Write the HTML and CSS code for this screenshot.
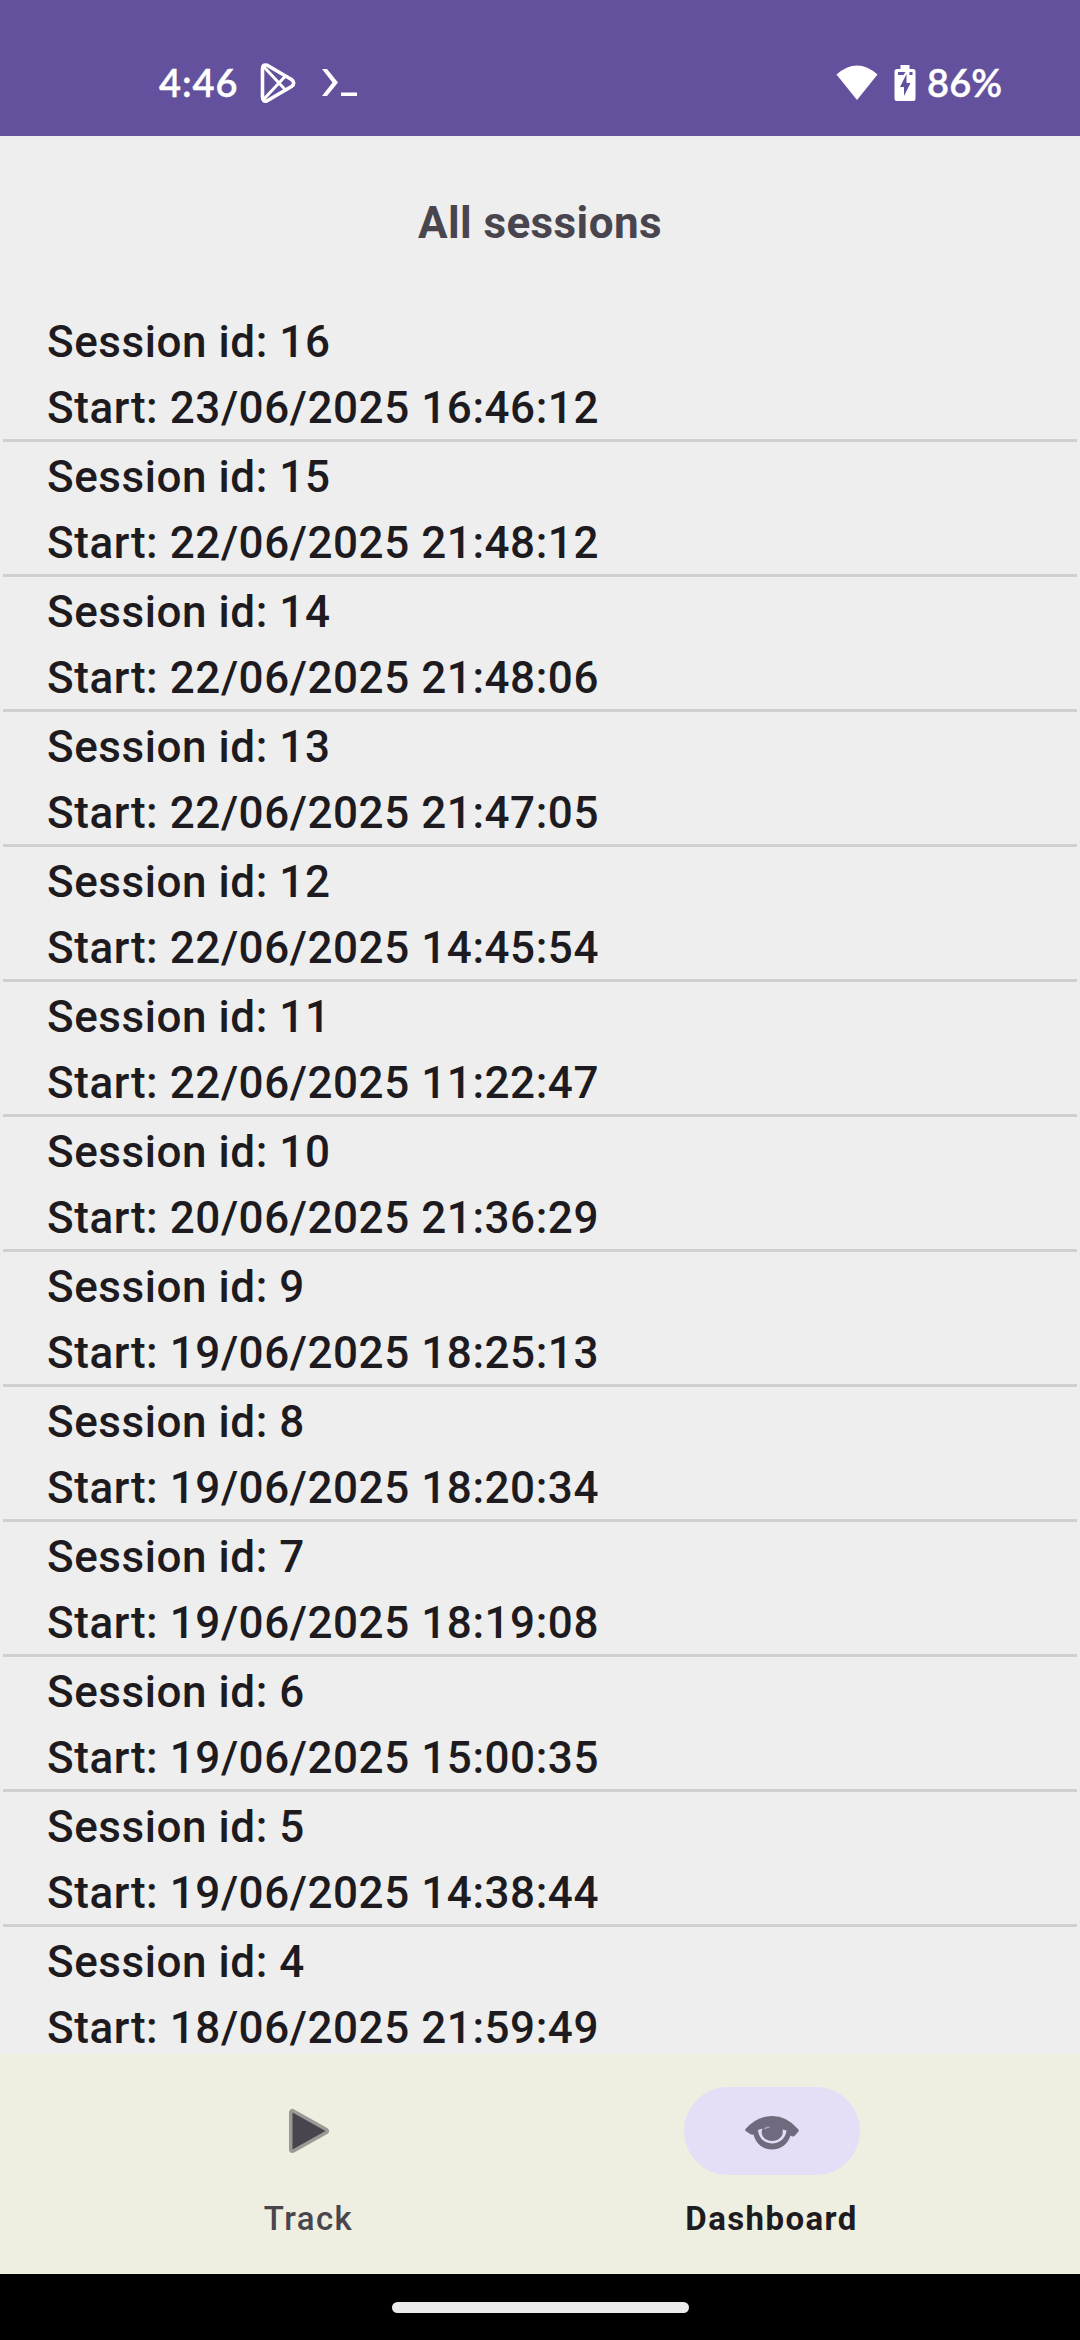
FILE: index.html
```html
<!DOCTYPE html>
<html lang="en">
<head>
<meta charset="utf-8">
<title>All sessions</title>
<link rel="stylesheet" href="styles.css">
</head>
<body>
<div class="screen">
  <header class="status-bar">
    <div class="status-left">
      <span class="clock">4:46</span>
      <svg class="play-store" width="36" height="40" viewBox="0 0 36 40" fill="none" stroke="#fff" stroke-width="3.6" stroke-linejoin="round" stroke-linecap="round"><path d="M2.5 5.5v29q.3 4.8 4.700 3.200L31.500 23.500q4.500-3.500 0-7L7.200 2.300Q2.800.8 2.500 5.500z"/><path d="M4 4l21.500 23M4 36l21.500-23" stroke-width="3"/></svg>
      <svg class="terminal" width="36" height="30" viewBox="0 0 36 30" fill="#fff"><path d="M0 1h5l11 13.500L5 28H0l10.500-13.500zM19 24.500h16v3.500H19z"/></svg>
    </div>
    <div class="status-right">
      <svg class="wifi" width="42" height="36" viewBox="0 0 42 36" fill="#fff"><path d="M0.500 9.500Q21-8.500 41.500 9.500L21 35z"/></svg>
      <svg class="battery" width="22" height="36" viewBox="0 0 22 36"><path fill="#fff" d="M6.500 0h9v4H19q2.500 0 2.500 2.500v27Q21.500 36 19 36H3Q.5 36 .5 33.500v-27Q.5 4 3 4h3.500z"/><path fill="#64519d" d="M4 7h7.500L9.500 10H4zM15.500 7h3v3h-3zM12.500 9v9h4L10 31v-9H6z"/></svg>
      <span class="percent">86%</span>
    </div>
  </header>
  <main class="content">
    <h1 class="title">All sessions</h1>
    <ul class="sessions">
      <li class="session"><p>Session id: 16</p><p>Start: 23/06/2025 16:46:12</p></li>
      <li class="session"><p>Session id: 15</p><p>Start: 22/06/2025 21:48:12</p></li>
      <li class="session"><p>Session id: 14</p><p>Start: 22/06/2025 21:48:06</p></li>
      <li class="session"><p>Session id: 13</p><p>Start: 22/06/2025 21:47:05</p></li>
      <li class="session"><p>Session id: 12</p><p>Start: 22/06/2025 14:45:54</p></li>
      <li class="session"><p>Session id: 11</p><p>Start: 22/06/2025 11:22:47</p></li>
      <li class="session"><p>Session id: 10</p><p>Start: 20/06/2025 21:36:29</p></li>
      <li class="session"><p>Session id: 9</p><p>Start: 19/06/2025 18:25:13</p></li>
      <li class="session"><p>Session id: 8</p><p>Start: 19/06/2025 18:20:34</p></li>
      <li class="session"><p>Session id: 7</p><p>Start: 19/06/2025 18:19:08</p></li>
      <li class="session"><p>Session id: 6</p><p>Start: 19/06/2025 15:00:35</p></li>
      <li class="session"><p>Session id: 5</p><p>Start: 19/06/2025 14:38:44</p></li>
      <li class="session"><p>Session id: 4</p><p>Start: 18/06/2025 21:59:49</p></li>
    </ul>
  </main>
  <nav class="bottom-nav">
    <a class="nav-item">
      <span class="indicator"><svg class="track-icon" width="66" height="66" viewBox="0 0 66 66"><path d="M16.500 14.500v37l33-18.500z" fill="#9c9a95" stroke="#9c9a95" stroke-width="7" stroke-linejoin="round"/><path d="M16.500 14.500v37l33-18.500z" fill="#49454f"/></svg></span>
      <span class="label">Track</span>
    </a>
    <a class="nav-item active">
      <span class="indicator"><svg width="66" height="66" viewBox="0 0 66 66"><path fill="#706a7f" d="M6.500 31Q18 18 33 18T59 31Q60.500 32.500 59 34L56 37.500Q54 39.500 51.500 37.500C49 46 42 51.500 33 51.500S17 46 14.500 36.500Q12.500 37.500 9 34.500Q5 33 6.500 31z"/><path fill="#e6def6" d="M19 32C19.500 39.500 25 45.500 33 45.500S47 39.500 47.500 32.500L43.500 31.500C45 38 40 43 33 43S20.500 37.500 23.500 30.500Z"/><path d="M25.500 31q2.500-2.500 5-1.500" fill="none" stroke="#aaa3ba" stroke-width="1.500"/></svg></span>
      <span class="label">Dashboard</span>
    </a>
  </nav>
  <footer class="gesture-bar"><div class="handle"></div></footer>
</div>
</body>
</html>
```
FILE: styles.css
```css
body, h1, ul, p {
  margin: 0;
  padding: 0;
}

.screen {
  width: 1080px;
  height: 2340px;
  display: flex;
  flex-direction: column;
  overflow: hidden;
  background: #eee;
  font-family: Roboto, sans-serif;
}

.status-bar {
  box-sizing: border-box;
  height: 136px;
  flex: none;
  padding: 30px 78px 0 159px;
  display: flex;
  justify-content: space-between;
  align-items: center;
  background: #64519d;
  color: #fff;
  font: 600 38px/44px Lato, sans-serif;
  -webkit-text-stroke: 0.4px #fff;
}

.status-left, .status-right {
  display: flex;
  align-items: center;
}

.clock, .percent {
  position: relative;
  top: -1px;
}

.clock { letter-spacing: 0.9px; }
.play-store { margin-left: 22px; }
.terminal { margin-left: 26px; }
.battery { margin-left: 16px; }
.percent { margin-left: 11px; }

.content {
  flex: 1;
  min-height: 0;
  overflow: hidden;
}

.title {
  height: 66px;
  padding: 54px 0 51px;
  text-align: center;
  font-size: 44px;
  font-weight: 700;
  line-height: 66px;
  letter-spacing: 0.41px;
  color: #49454f;
}

.sessions {
  list-style: none;
  padding: 0 3px;
}

.session {
  height: 132px;
  padding-left: 44px;
  border-bottom: 3px solid #d0d0d0;
  font-size: 44px;
  font-weight: 500;
  line-height: 66px;
  letter-spacing: 0.56px;
  color: #1d1b20;
}

.session p {
  box-sizing: border-box;
  height: 66px;
  padding-top: 2px;
}

.bottom-nav {
  box-sizing: border-box;
  height: 220px;
  flex: none;
  padding: 33px 77px 0;
  display: grid;
  grid-template-columns: 1fr 1fr;
  background: #eeefe1;
}

.nav-item {
  display: flex;
  flex-direction: column;
  align-items: center;
  gap: 22px;
  color: #49454f;
}

.indicator {
  width: 176px;
  height: 88px;
  border-radius: 44px;
  display: flex;
  align-items: center;
  justify-content: center;
}

.label {
  font-size: 33px;
  font-weight: 500;
  line-height: 44px;
  letter-spacing: 1.4px;
}

.active { color: #1d1b20; }
.active .indicator { background: #e6def6; }
.active .label { font-weight: 700; }

.gesture-bar {
  height: 66px;
  flex: none;
  display: flex;
  align-items: center;
  justify-content: center;
  background: #000;
}

.handle {
  width: 297px;
  height: 11px;
  border-radius: 6px;
  background: #ebebeb;
}
```
